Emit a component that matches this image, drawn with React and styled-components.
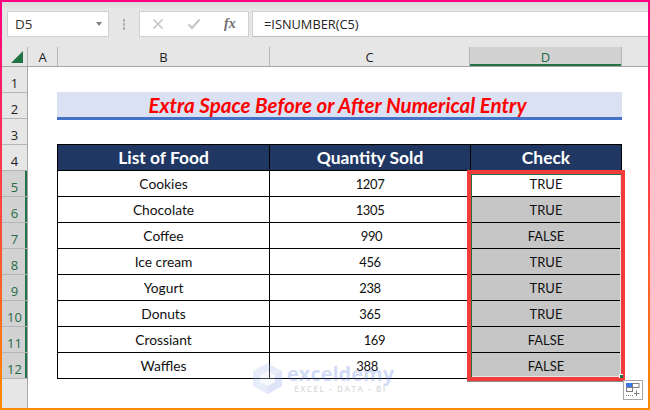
import React from 'react';
import styled, { createGlobalStyle } from 'styled-components';

const GlobalStyle = createGlobalStyle`
  html, body {
    margin: 0;
    padding: 0;
    background: #fff;
  }
`;

const Frame = styled.div`
  position: relative;
  box-sizing: border-box;
  width: 650px;
  height: 410px;
  border: 2px solid;
  border-image: linear-gradient(180deg, #ff0080, #ff8c00) 1;
  background: linear-gradient(180deg, #d9d9d9 0, #e6e6e6 7px);
  display: flex;
  flex-direction: column;
  overflow: hidden;
`;

const FormulaRow = styled.div`
  display: flex;
  align-items: stretch;
  height: 26px;
  margin-top: 9px;
  margin-bottom: 10px;
  padding-left: 5px;
  font-family: 'Open Sans', sans-serif;
  color: #333;
`;

const NameBox = styled.div`
  box-sizing: border-box;
  width: 102px;
  background: #fff;
  border: 1px solid #d0d0d0;
  display: flex;
  align-items: center;
  justify-content: space-between;
  padding: 0 6px 0 7px;
  font-size: 13.5px;
`;

const Caret = styled.span`
  width: 0;
  height: 0;
  border-left: 3.5px solid transparent;
  border-right: 3.5px solid transparent;
  border-top: 4px solid #7f7f7f;
`;

const Grip = styled.div`
  width: 30px;
  display: flex;
  flex-direction: column;
  align-items: center;
  justify-content: center;
  gap: 1px;
`;

const GripDot = styled.span`
  width: 2px;
  height: 3px;
  background: #b0b0b0;
`;

const FxBox = styled.div`
  box-sizing: border-box;
  width: 110px;
  background: #fff;
  border: 1px solid #d0d0d0;
  display: flex;
  align-items: center;
  padding-left: 12px;
  gap: 23px;
`;

const FxLabel = styled.span`
  font-family: 'Liberation Serif', serif;
  font-style: italic;
  font-weight: bold;
  font-size: 14px;
  color: #6e6e6e;
`;

const FormulaInput = styled.div`
  flex: 1;
  margin-left: 3px;
  background: #fff;
  border-top: 1px solid #d0d0d0;
  border-bottom: 1px solid #bdbdbd;
  border-left: 1px solid #d0d0d0;
  display: flex;
  align-items: center;
  padding-left: 11px;
  color: #222;
  font-size: 12.8px;
`;

const HeaderRow = styled.div`
  display: grid;
  grid-template-columns: 26px 30px 212px 200px 152px 1fr;
  height: 20px;
  box-sizing: border-box;
  border-bottom: 1px solid #a6a6a6;
  font-family: 'Open Sans', sans-serif;
  font-size: 13px;
  color: #222;
`;

const CornerCell = styled.div`
  display: flex;
  align-items: flex-end;
  justify-content: flex-end;
  padding: 0 3px 3px 0;
  border-right: 1px solid #b5b5b5;
`;

const ColHead = styled.div`
  display: flex;
  align-items: center;
  justify-content: center;
  box-sizing: border-box;
  border-right: ${p => (p.$plain ? 'none' : '1px solid #b5b5b5')};
  background: ${p => (p.$active ? '#d2d2d2' : 'transparent')};
  color: ${p => (p.$active ? '#1f6b45' : '#222')};
  box-shadow: ${p => (p.$active ? 'inset 0 -2px 0 #217346' : 'none')};
`;

const SheetArea = styled.div`
  flex: 1;
  display: flex;
  min-height: 0;
`;

const RowHeads = styled.div`
  box-sizing: border-box;
  width: 26px;
  border-right: 1px solid #a6a6a6;
  font-family: 'Open Sans', sans-serif;
  font-size: 13px;
`;

const RowHead = styled.div`
  box-sizing: border-box;
  height: 26px;
  padding-top: 6px;
  display: flex;
  align-items: center;
  justify-content: center;
  border-bottom: 1px solid #b5b5b5;
  background: ${p => (p.$active ? '#d2d2d2' : 'transparent')};
  color: ${p => (p.$active ? '#1f6b45' : '#222')};
  box-shadow: ${p => (p.$active ? 'inset -2px 0 0 #217346' : 'none')};
`;

const Sheet = styled.div`
  flex: 1;
  background: #fff;
  padding: 25px 0 0 29px;
  font-family: Lato, sans-serif;
`;

const TitleBand = styled.div`
  box-sizing: border-box;
  width: 565px;
  height: 28px;
  padding-right: 4px;
  background: #d9e1f2;
  border-bottom: 3px solid #4472c4;
  display: flex;
  align-items: center;
  justify-content: center;
  color: #ff0000;
  font-weight: 700;
  font-style: italic;
  font-size: 20.6px;
  white-space: pre;
`;

const Table = styled.div`
  box-sizing: border-box;
  width: 565px;
  margin-top: 24px;
  border-top: 1px solid #000;
  border-left: 1px solid #000;
  color: #111;
`;

const Row = styled.div`
  display: grid;
  grid-template-columns: 212px 201px 151px;
  height: 26px;
`;

const Cell = styled.div`
  box-sizing: border-box;
  display: flex;
  align-items: center;
  justify-content: center;
  white-space: pre;
  font-size: ${p => p.$size || 13}px;
  border-right: 1px solid #000;
  border-bottom: 1px solid #000;
  background: ${p => (p.$fill ? '#c6c6c6' : 'transparent')};
`;

const QtyCell = styled(Cell)`
  letter-spacing: -0.4px;
`;

const HeadCell = styled(Cell)`
  background: #203764;
  color: #fff;
  font-weight: 700;
  font-size: 17.4px;
`;

const Selection = styled.div`
  position: absolute;
  left: 465px;
  top: 168px;
  width: 158px;
  height: 211px;
  box-sizing: border-box;
  border: 4px solid #f43b3b;
  box-shadow: inset 1px 1px 0 #217346, inset -1px -1px 0 #e4e4e4, 0 1px 0 #8a8a8a;
`;

const FillHandle = styled.span`
  position: absolute;
  right: -2px;
  bottom: -1px;
  width: 3px;
  height: 3px;
  background: #217346;
  border-left: 1px solid #fff;
  border-top: 1px solid #fff;
`;

const Watermark = styled.div`
  position: absolute;
  left: 251px;
  top: 361px;
  display: flex;
  align-items: flex-start;
  gap: 5px;
  opacity: 0.28;
  pointer-events: none;
`;

const WatermarkText = styled.div`
  display: flex;
  flex-direction: column;
  align-items: center;
  font-family: 'Open Sans', sans-serif;
`;

const WatermarkName = styled.span`
  font-size: 20px;
  font-weight: 700;
  line-height: 21px;
  color: #5f7fe0;
`;

const WatermarkTag = styled.span`
  font-size: 8px;
  font-weight: 600;
  letter-spacing: 1.6px;
  line-height: 10px;
  color: #7a7a7a;
`;

const PasteButton = styled.div`
  position: absolute;
  left: 621px;
  top: 378px;
  width: 20px;
  height: 20px;
  box-sizing: border-box;
  background: #fff;
  border: 1px solid #a6a6a6;
  display: flex;
  align-items: center;
  justify-content: center;
`;

const columns = ['A', 'B', 'C', 'D'];

// the odd spaces in the quantities are the point of the sheet, keep them
const foods = [
  ['Cookies', '1207', 'TRUE'],
  ['Chocolate', '1305', 'TRUE'],
  ['Coffee', ' 990', 'FALSE'],
  ['Ice cream', '456', 'TRUE'],
  ['Yogurt', '238', 'TRUE'],
  ['Donuts', '365', 'TRUE'],
  ['Crossiant', '   169', 'FALSE'],
  ['Waffles', '388  ', 'FALSE'],
];

const CornerMark = () => (
  <svg width="13" height="12" viewBox="0 0 13 12">
    <path d="M12 0V12H0Z" fill="#217346" />
  </svg>
);

const CancelIcon = () => (
  <svg width="12" height="12" viewBox="0 0 12 12">
    <path d="M1.5 1.5L10.5 10.5M10.5 1.5L1.5 10.5" stroke="#c4c4c4" strokeWidth="1.6" fill="none" />
  </svg>
);

const EnterIcon = () => (
  <svg width="14" height="12" viewBox="0 0 14 12">
    <path d="M1.5 6.5L5 10L12.5 1.5" stroke="#c4c4c4" strokeWidth="2" fill="none" />
  </svg>
);

const PasteIcon = () => (
  <svg width="14" height="14" viewBox="0 0 14 14">
    <rect x="0.5" y="0.5" width="6" height="4" fill="#3b78e7" stroke="#3b78e7" />
    <rect x="6.5" y="0.5" width="6.5" height="4" fill="#fff" stroke="#7f7f7f" />
    <rect x="0.5" y="4.5" width="6" height="4" fill="#fff" stroke="#7f7f7f" />
    <path d="M0 12.5H7" stroke="#7f7f7f" strokeDasharray="1 1" fill="none" />
    <path d="M10.5 7.5V13M8 10.5H13.5" stroke="#7f7f7f" fill="none" />
  </svg>
);

const LogoMark = () => (
  <svg width="29" height="31" viewBox="0 0 29 31">
    <path d="M14.5 0L29 8V23L14.5 31L0 23V8Z" fill="#a9bdf0" />
    <path d="M14.5 15L29 8V23L14.5 31Z" fill="#8aa3ea" />
    <path d="M14.5 8L22 12V19L14.5 23L7 19V12Z" fill="#e4eafb" />
  </svg>
);

const App = () => (
  <>
    <GlobalStyle />
    <Frame>
      <FormulaRow>
        <NameBox>
          D5
          <Caret />
        </NameBox>
        <Grip>
          <GripDot />
          <GripDot />
          <GripDot />
        </Grip>
        <FxBox>
          <CancelIcon />
          <EnterIcon />
          <FxLabel>fx</FxLabel>
        </FxBox>
        <FormulaInput>=ISNUMBER(C5)</FormulaInput>
      </FormulaRow>

      <HeaderRow>
        <CornerCell>
          <CornerMark />
        </CornerCell>
        {columns.map(col => (
          <ColHead key={col} $active={col === 'D'}>
            {col}
          </ColHead>
        ))}
        <ColHead $plain />
      </HeaderRow>

      <SheetArea>
        <RowHeads>
          {Array.from({ length: 12 }, (_, i) => (
            <RowHead key={i} $active={i >= 4}>
              {i + 1}
            </RowHead>
          ))}
        </RowHeads>
        <Sheet>
          <TitleBand>Extra Space Before or After Numerical Entry</TitleBand>
          <Table>
            <Row>
              <HeadCell>List of Food</HeadCell>
              <HeadCell>Quantity Sold</HeadCell>
              <HeadCell>Check</HeadCell>
            </Row>
            {foods.map(([food, qty, check], i) => (
              <Row key={food}>
                <Cell $size={13.8}>{food}</Cell>
                <QtyCell>{qty}</QtyCell>
                <Cell $fill={i > 0}>{check}</Cell>
              </Row>
            ))}
          </Table>
        </Sheet>
      </SheetArea>

      <Watermark>
        <LogoMark />
        <WatermarkText>
          <WatermarkName>exceldemy</WatermarkName>
          <WatermarkTag>EXCEL - DATA - BI</WatermarkTag>
        </WatermarkText>
      </Watermark>

      <Selection>
        <FillHandle />
      </Selection>
      <PasteButton>
        <PasteIcon />
      </PasteButton>
    </Frame>
  </>
);

export default App;
